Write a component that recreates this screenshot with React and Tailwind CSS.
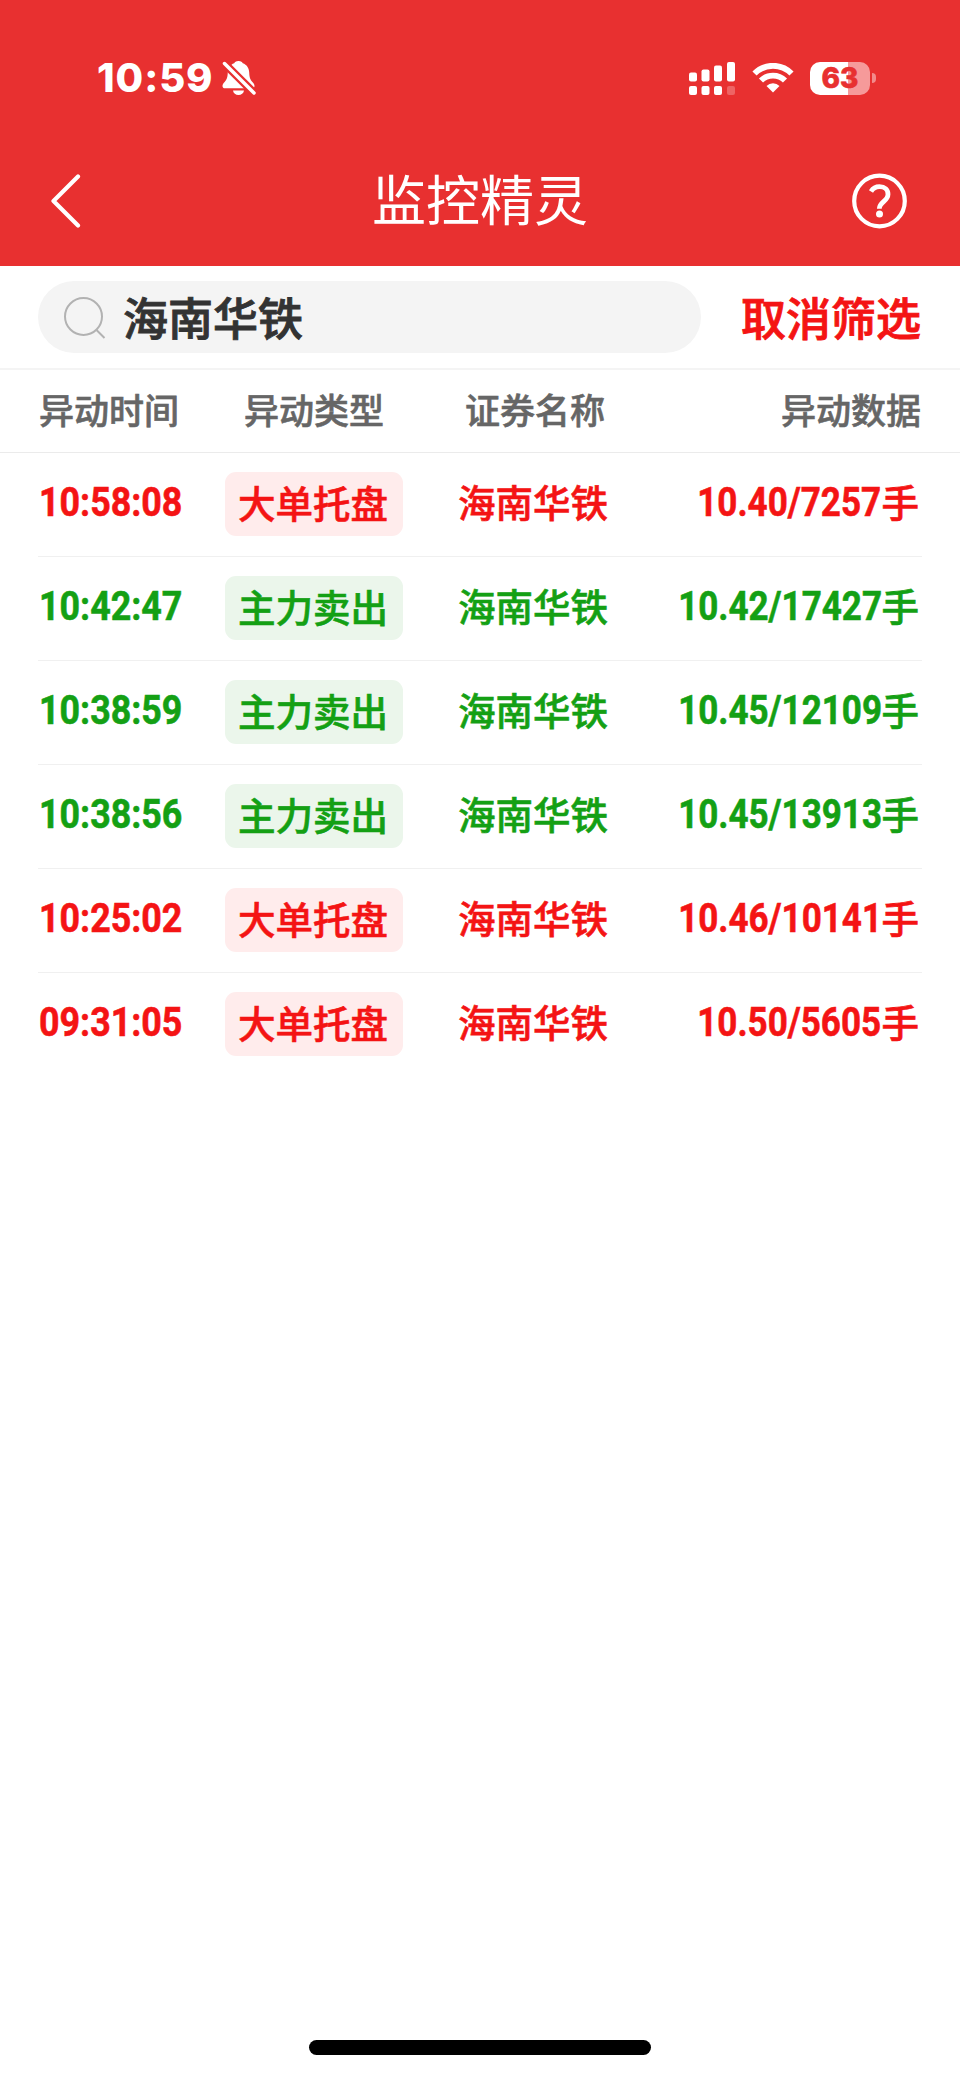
const ROWS = [
  { time: '10:58:08', type: '大单托盘', name: '海南华铁', data: '10.40/7257', tone: 'up' },
  { time: '10:42:47', type: '主力卖出', name: '海南华铁', data: '10.42/17427', tone: 'down' },
  { time: '10:38:59', type: '主力卖出', name: '海南华铁', data: '10.45/12109', tone: 'down' },
  { time: '10:38:56', type: '主力卖出', name: '海南华铁', data: '10.45/13913', tone: 'down' },
  { time: '10:25:02', type: '大单托盘', name: '海南华铁', data: '10.46/10141', tone: 'up' },
  { time: '09:31:05', type: '大单托盘', name: '海南华铁', data: '10.50/5605', tone: 'up' },
];

const TONES = {
  up: { text: 'text-[#f41414]', pill: 'bg-[#ffecec]' },
  down: { text: 'text-[#14a014]', pill: 'bg-[#ebf6eb]' },
};

function BellOff() {
  return (
    <svg width="34" height="36" viewBox="0 0 34 36" fill="none">
      <path
        d="M16.5 1c-2.6 0-3.8 1.3-4.3 2.3C8.200 4.700 6 8 5.800 12.300c-.2 5-.8 7.200-3.200 9.700C1.200 23.500.5 24.600.5 26c0 1.400 1 2.300 2.500 2.300h27c1.500 0 2.500-.9 2.500-2.300 0-1.400-.7-2.500-2.100-4-2.400-2.500-3-4.700-3.200-9.700C27 8 24.800 4.700 20.800 3.300 20.300 2.300 19.100 1 16.500 1z"
        fill="#fff"
      />
      <path d="M11 30.500h11c-.4 2.800-2.700 4.600-5.500 4.600s-5.100-1.800-5.500-4.600z" fill="#fff" />
      <path d="M0 1 34 35" stroke="#e83030" strokeWidth="8" />
      <path d="M2.500 3.500 32 33" stroke="#fff" strokeWidth="3.500" strokeLinecap="round" />
    </svg>
  );
}

function Signal() {
  const bars = [
    { x: 0, y: 10.5 },
    { x: 12.5, y: 7.5 },
    { x: 25, y: 3.5 },
    { x: 38, y: 0 },
  ];
  return (
    <svg width="46" height="33" viewBox="0 0 46 33" fill="#fff">
      {bars.map((b, i) => (
        <g key={b.x}>
          <rect x={b.x} y={b.y} width="8" height={19.5 - b.y} rx="2" />
          <rect x={b.x} y="24" width="8" height="9" rx="2" opacity={i === 3 ? 0.25 : 1} />
        </g>
      ))}
    </svg>
  );
}

function Wifi() {
  return (
    <svg width="42" height="30" viewBox="0 0 42 30" fill="none" stroke="#fff" strokeWidth="5.800">
      <path d="M2.500 10.500a26 26 0 0 1 37 0" />
      <path d="M9 17.500a17 17 0 0 1 24 0" />
      <path d="M14.500 23a9.300 9.300 0 0 1 13 0L21 29.500z" fill="#fff" stroke="none" />
    </svg>
  );
}

function Battery() {
  return (
    <div className="flex items-center gap-[2px]">
      <div className="flex h-[33px] w-[60px] items-center justify-center rounded-[10px] bg-[linear-gradient(to_right,#fff_38px,#f69a9a_38px)]">
        <span className="font-[Inter] text-[28px] font-extrabold leading-none text-[#e83030] [-webkit-text-stroke:0.6px]">63</span>
      </div>
      <div className="h-[10px] w-[4px] rounded-r-full bg-[#f28b8b]" />
    </div>
  );
}

function Header() {
  return (
    <header className="h-[266px] bg-[#e83030] text-white">
      <div className="flex h-[156px] items-center justify-between pl-[97px] pr-[84px]">
        <div className="flex items-center gap-[9px]">
          <span className="font-[Inter] text-[40px] font-extrabold leading-none tracking-[0.9px]">10:59</span>
          <BellOff />
        </div>
        <div className="flex items-center">
          <Signal />
          <div className="ml-[17px] mr-[16px]"><Wifi /></div>
          <Battery />
        </div>
      </div>
      <div className="flex h-[90px] items-center pl-[50px] pr-[53px]">
        <svg width="32" height="54" viewBox="0 0 32 54" fill="none" stroke="#fff" strokeWidth="4.200" strokeLinecap="round" strokeLinejoin="round">
          <path d="M28 2.500 3.500 27 28 51.500" />
        </svg>
        <h1 className="ml-[290px] pb-[6px] text-[54px] font-normal leading-none">监控精灵</h1>
        <svg className="ml-auto" width="56" height="56" viewBox="0 0 56 56" fill="none" stroke="#fff" strokeWidth="4.200">
          <circle cx="28.500" cy="28" r="25.300" />
          <path d="M20 18.500c2-3.300 5-4.800 8.500-4.800 5.300 0 8.500 2.900 8.500 7.500 0 7-8.700 7.800-8.700 14.500" strokeWidth="4.800" />
          <circle cx="28.500" cy="41" r="3.500" fill="#fff" stroke="none" />
        </svg>
      </div>
    </header>
  );
}

function SearchBar() {
  return (
    <div className="flex h-[104px] items-center justify-between border-b-2 border-[#f4f4f4] pl-[38px] pr-[39px]">
      <div className="flex h-[72px] w-[663px] items-center gap-[17px] rounded-full bg-[#f4f4f4] pl-[25px]">
        <svg width="43" height="43" viewBox="0 0 43 43" fill="none" stroke="#b2b2b2" strokeWidth="2">
          <circle cx="20.500" cy="20.500" r="18.500" />
          <path d="M33.500 34 41.500 42" />
        </svg>
        <span className="pb-[2px] text-[45px] font-medium leading-none text-[#333] [-webkit-text-stroke:0.9px]">海南华铁</span>
      </div>
      <button className="pb-[2px] text-[45px] font-medium leading-none text-[#f41414] [-webkit-text-stroke:0.9px]">取消筛选</button>
    </div>
  );
}

function Row({ row }) {
  const tone = TONES[row.tone];
  return (
    <div className={`flex h-[104px] items-start border-b border-[#f0f0f0] pt-[19px] text-[37.500px] font-medium leading-none last:border-transparent [-webkit-text-stroke:0.6px] ${tone.text}`}>
      <div className="flex h-[62px] w-[187px] items-center">
        <span className="ml-px origin-left scale-x-[0.895] font-[Roboto] text-[40px] font-bold">{row.time}</span>
      </div>
      <div className={`flex h-[64px] w-[178px] items-center justify-center rounded-[11px] pb-[4px] pr-[2px] ${tone.pill}`}>{row.type}</div>
      <div className="ml-[55px] flex h-[60px] items-center pb-[2px]">{row.name}</div>
      <div className="flex h-[62px] flex-1 items-center justify-end pr-[3px]">
        <span className="origin-right scale-x-[0.875] font-[Roboto] text-[40px] font-bold">{row.data}</span>
        <span className="pb-[4px]">手</span>
      </div>
    </div>
  );
}

export default function App() {
  return (
    <div className="flex h-[2079px] w-[960px] flex-col overflow-hidden bg-white font-['Noto_Sans_CJK_SC',sans-serif]">
      <Header />
      <SearchBar />
      <div className="flex h-[83px] items-center border-b border-[#ebebeb] px-[39px] pb-[5px] text-[35px] font-medium leading-none text-[#666] [-webkit-text-stroke:0.6px]">
        <span className="w-[205px]">异动时间</span>
        <span className="w-[221px]">异动类型</span>
        <span>证券名称</span>
        <span className="ml-auto">异动数据</span>
      </div>
      <div className="px-[38px]">
        {ROWS.map((row) => (
          <Row key={row.time} row={row} />
        ))}
      </div>
      <div className="mx-auto mb-[24px] mt-auto h-[15px] w-[342px] rounded-full bg-black" />
    </div>
  );
}
